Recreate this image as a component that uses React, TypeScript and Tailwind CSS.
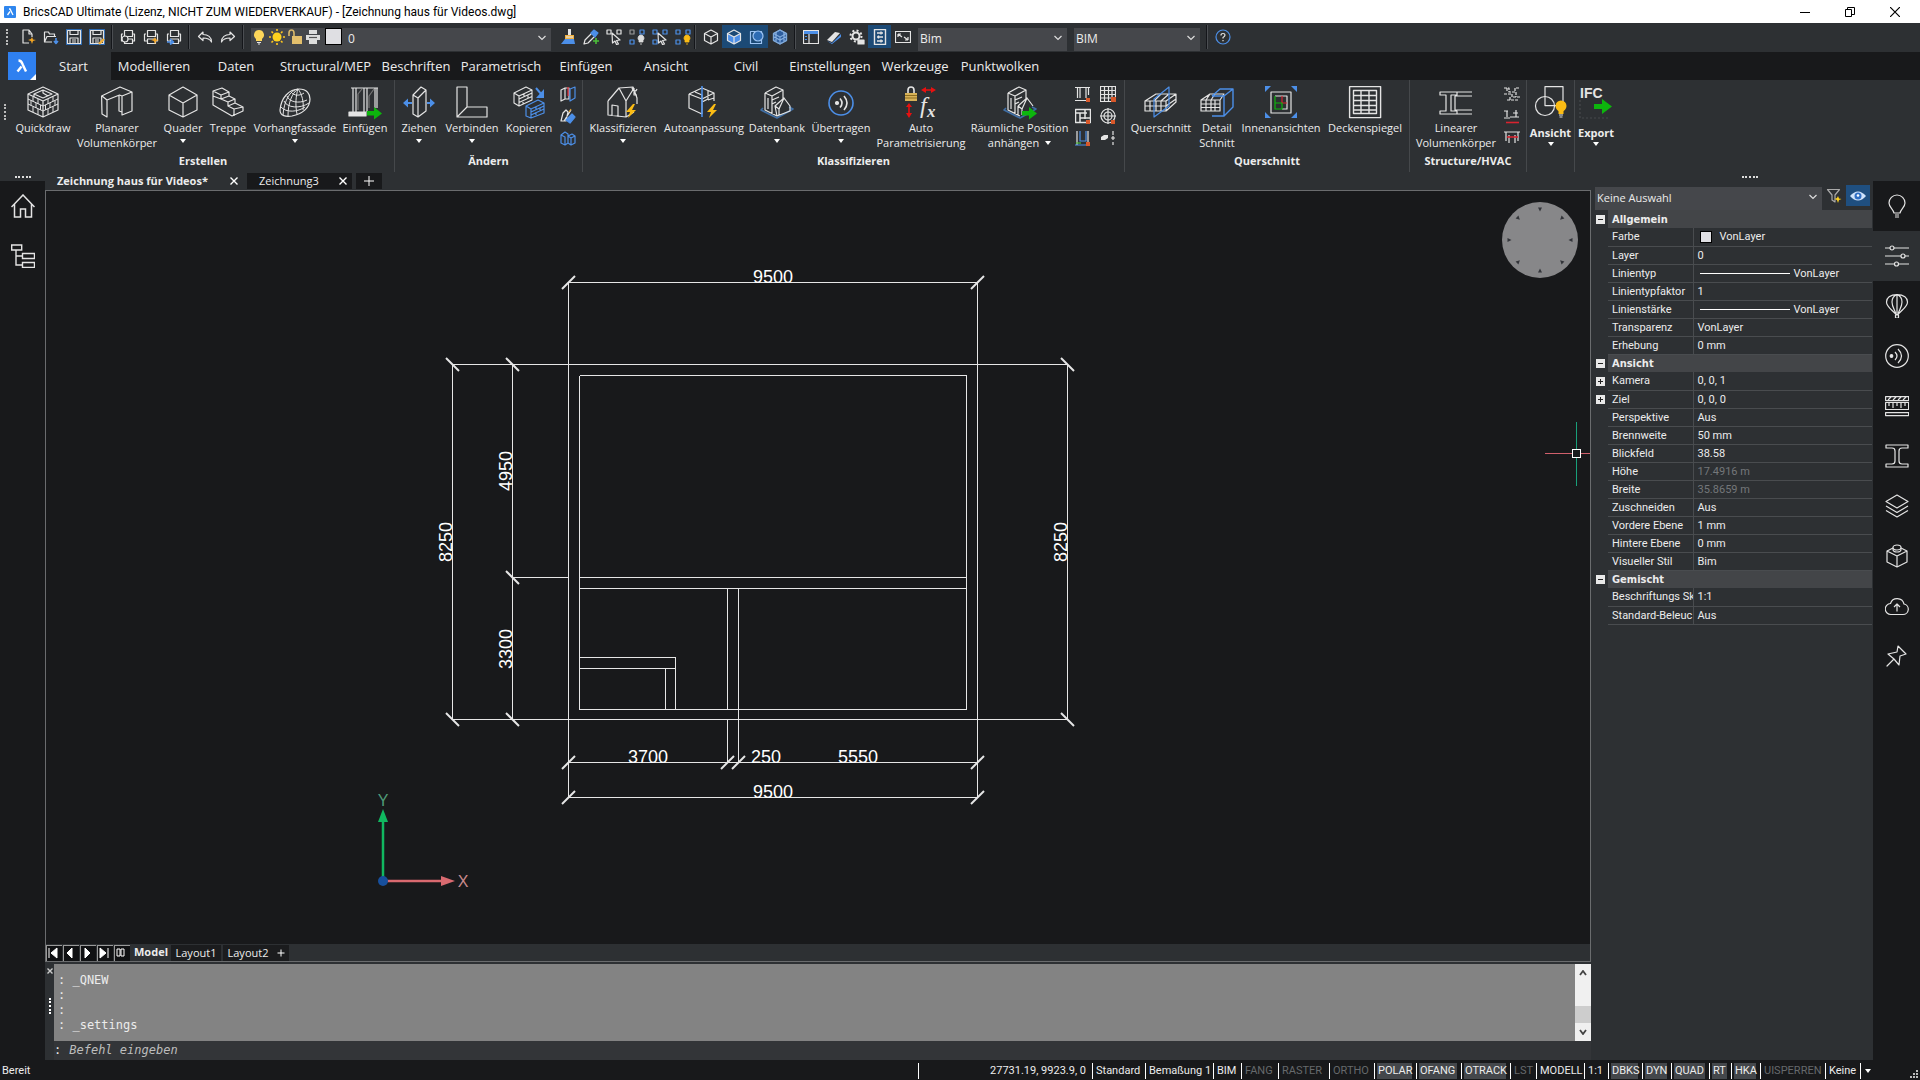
import { useState } from "react";
import type { ReactNode } from "react";

const W = "#e4e4e4";
const B = "#4c8fe8";
const Y = "#fbbc14";
const G = "#0db50d";
const R = "#d8232f";

function Big({ children }: { children: ReactNode }) {
  return (
    <svg viewBox="0 0 32 32" className="size-8 shrink-0 overflow-visible" fill="none" stroke={W} strokeWidth="1.2" strokeLinejoin="round">
      {children}
    </svg>
  );
}

function Small({ children }: { children: ReactNode }) {
  return (
    <svg viewBox="0 0 16 16" className="size-4 shrink-0" fill="none" stroke={W} strokeWidth="1.2" strokeLinejoin="round">
      {children}
    </svg>
  );
}

const bolt = <path d="M26 18l-7 8h4l-2 6 8-8h-4l3-6z" fill={Y} stroke="none" />;
const arrow = <path d="M18 25h7v-4l8 6.500-8 6v-4h-7z" fill={G} stroke="none" />;

const icons: Record<string, ReactNode> = {
  quickdraw: (
    <Big>
      <path d="M1 8L16 1l15 7v16l-15 7-15-7z M1 8l15 7 15-7 M16 15v16 M7 8l9-4 9 4-9 4z M7 8v3 M16 4v3l5 3" />
      <path d="M1 13l15 7 15-7 M1 18l15 7 15-7 M6 10.500v5 M11 13v5 M4 14.500v5 M9 17v5 M13.500 19v5 M6 20.500v5.500 M11 23v5.500 M26 10.500v5 M21 13v5 M28 14.500v5 M23 17v5 M18.500 19v5 M26 20.500v5.500 M21 23v5.500" strokeWidth="1" />
    </Big>
  ),
  planar: (
    <Big>
      <path d="M0.600 10L19 1l12 5v19l-10 4v-19l-2.500-1L6 14v17l-5-3z M1 10l5 4 M31 6l-10 4 M21 26l-3-1V9" />
    </Big>
  ),
  box: (
    <Big>
      <path d="M2 9L16 1l14 8v15l-14 7-14-7z M2 9l14 8 14-8 M16 17v14" />
    </Big>
  ),
  stairs: (
    <Big>
      <path d="M1 5l9-3 7 4v4l6 3v4l8 4v4l-11 5L1 19z M1 5l8 4v4l7 3v4l6 3v7 M9 9l8-3 M9 13l8-3 M16 16l7-3 M16 20l7-3 M22 23l9-2 M1 10l8 3" />
    </Big>
  ),
  dome: (
    <Big>
      <path d="M1 24C2 12 10 3 20 3c8 0 11 5 11 10 0 9-8 15-18 17-6 1-12 0-12-6z" />
      <path d="M8 10c2 6 12 8 20 4 M5 15c3 7 16 8 25 2 M2 21c5 6 17 5 24 0 M12 6c3 4 9 4 13 1 M19 3c-6 4-10 14-10 27 M19 3c-2 6-3 16-1 25 M19 3c4 5 6 13 5 21 M19 3c-8 1-14 12-15 26" strokeWidth="1" />
    </Big>
  ),
  window: (
    <Big>
      <path d="M2 2h27 M4 2v24 M7 2v24 M15 2v24 M18 2v24 M26 2v20 M28 2v20" />
      <path d="M9 24V8l4-5 M20 22V10l5-7" stroke="#777" />
      <path d="M0 26h17v4H0z" fill={W} />
      {arrow}
    </Big>
  ),
  pull: (
    <Big>
      <path d="M10 9l8-8 5 3v21l-8 6-5-3z M10 9l5 3 8-8 M15 12v19" />
      <path d="M9 17H2 M24 17h6" stroke={B} strokeWidth="2" />
      <path d="M5 12.500L0 17l5 4.500z M27 12.500l5 4.500-5 4.500z" fill={B} stroke="none" />
    </Big>
  ),
  connect: (
    <Big>
      <path d="M1 1h10v20h20v10H1z M1 31l10-10" />
    </Big>
  ),
  copy: (
    <Big>
      <path d="M1 7l12-6 6 3v10L6 20l-5-3z M1 7l5 3 13-6 M6 10v10 M6 13l13-6 M6 16.500l13-6 M11 8v3 M15 9.500v3 M10 14.500v3" strokeWidth="1.100" />
      <path d="M13 20l12-6 6 3v10L18 32l-5-2z M13 20l5 3 13-6 M18 23v9 M18 26l13-6 M18 29l13-6 M23 21v3 M27 22v3 M23 26v3" stroke={B} />
      <path d="M23 2l6 7" stroke={B} strokeWidth="2" />
      <path d="M31 3v9h-8z" fill={B} stroke="none" />
    </Big>
  ),
  house: (
    <Big>
      <path d="M1 15L12 2l14-1 4 11v6 M12 2l7 13v16l8-5 M1 15v14l18 2 M5 30V19l6 1v11 M19 15L27 2 M27 2v7h3 M25 2c1 4 4 4 5 1" />
      {bolt}
    </Big>
  ),
  autofit: (
    <Big>
      <path d="M1 8L14 2l12 5v8 M1 8v14l13 6 M1 8l13 5v15 M14 13l12-6 M7 6l7 3v4 M20 5v8l-6 3 M26 12l-6 2" />
      <path d="M14 0v31" stroke={B} strokeWidth="1.600" />
      {bolt}
    </Big>
  ),
  database: (
    <Big>
      <path d="M2 22l-2 2 16 8 16-9-4-2" stroke="#3f6ea5" strokeWidth="1.600" />
      <path d="M4 7L15 1l7 3v9 M4 7l7 3v18 M4 7v17l12 6 M11 10l11-6 M7 12v11 M11 14l7-3 M11 18l4-2 M14 20l9-8 6 8v5l-13 5z M14 20l4 3 5-11 M18 23v6" />
    </Big>
  ),
  transmit: (
    <Big>
      <circle cx="16" cy="17" r="12" stroke={B} strokeWidth="1.600" />
      <circle cx="12" cy="17" r="1.500" fill={W} />
      <path d="M15 12.500q4 4.500 0 9 M19 10q6 7 0 14" strokeWidth="1.600" />
    </Big>
  ),
  autoparam: (
    <Big>
      <path d="M3 7V4q0-3 3-3t3 3v3" strokeWidth="1.600" />
      <path d="M0 7h12v8H0z" fill="#d7b258" stroke="none" />
      <path d="M0 9.500h12 M0 12h12" stroke="#8d6d20" />
      <path d="M18 4h11 M4 20v9" stroke="#e81010" strokeWidth="1.600" />
      <path d="M16 4l5-3v6z M31 4l-5-3v6z M4 17l-3 4h6z M4 32l-3-5h6z" fill="#e81010" stroke="none" />
      <text x="15" y="27" fill={W} stroke="none" className="font-['Liberation_Serif'] text-[24px] italic">f</text>
      <text x="22" y="31" fill={W} stroke="none" className="font-['Liberation_Serif'] text-[17px] font-bold italic">x</text>
    </Big>
  ),
  spatial: (
    <Big>
      <path d="M2 22l-2 2 16 8 16-9-4-2" stroke="#3f6ea5" strokeWidth="1.600" />
      <path d="M4 7L15 1l7 3v9 M4 7l7 3v18 M4 7v17l12 6 M11 10l11-6 M7 12v11 M11 14l7-3 M11 18l4-2 M14 20l9-8 6 8 M14 20v9 M14 20l4 3 5-11 M18 23v6" />
      {arrow}
    </Big>
  ),
  section: (
    <Big>
      <path d="M0 15l11-7h20v8l-10 9H0z M0 15h21v10 M21 15l10-7 M0 20h21l10-7 M5 15v10 M11 15v10 M16 8l-7 7 M24 8l-8 7v10" />
      <path d="M9 13L24 1v19L9 31z" stroke={B} />
    </Big>
  ),
  detail: (
    <Big>
      <path d="M0 14l9-6h14l-4 6v11H0z M0 14h19 M0 18h19 M0 21.500h19 M5 14v11 M10 14v11 M14 14v11 M9 8l-4 6 M14 8l-4 6" />
      <path d="M11 10l8-7h13v18l-9 9H11 M32 3l-9 7v20 M11 10h12" stroke={B} strokeWidth="1.400" />
    </Big>
  ),
  interior: (
    <Big>
      <path d="M6 6h20v21H6z" />
      <path d="M10 10h12v13h-5" />
      <path d="M17 10v7h5" stroke={R} />
      <path d="M10 10v13h7v-6h-7" stroke={G} />
      <path d="M0 0h6L0 6z M32 0v6l-6-6z M0 32v-6l6 6z M32 32h-6l6-6z" fill={B} stroke="none" />
    </Big>
  ),
  ceiling: (
    <Big>
      <path d="M0.600 0.600h31v31h-31z M4.500 4.500h23v23h-23z M12 4.500v23 M20 4.500v23 M4.500 9.500h23 M4.500 14.500h23 M4.500 19.500h23 M4.500 24h23" strokeWidth="1.400" />
    </Big>
  ),
  beam: (
    <Big>
      <path d="M32 6H0v3h6v16H0v3h32 M32 10H15v14h17 M17 6v3h-6v16h6v3" />
    </Big>
  ),
  view: (
    <Big>
      <path d="M10 0.600h18v19H10z" />
      <circle cx="10" cy="20" r="9.500" />
      <circle cx="26" cy="20" r="5.500" fill={Y} stroke="none" />
      <path d="M23.500 24h5v4h-5z" fill={Y} stroke="none" />
      <path d="M24 29h4 M24.500 31h3" stroke="#ddd" />
    </Big>
  ),
  export: (
    <Big>
      <text x="0" y="12" fill={W} stroke="none" className="font-['Liberation_Sans'] text-[14px]">IFC</text>
      <path d="M0 14v18h30" stroke="#46494c" strokeDasharray="2 2" />
      <path d="M14 18h8v-5l10 7.500-10 7.500v-5h-8z" fill={G} stroke="none" />
    </Big>
  ),
};

interface Tool {
  icon: string;
  label: string[];
  width: string;
  menu?: boolean;
}

function ToolButton({ icon, label, width, menu }: Tool) {
  return (
    <button className={`flex shrink-0 flex-col items-center pt-1.5 text-center text-[11px] leading-[15px] whitespace-nowrap hover:bg-[#3d4145] ${width}`}>
      {icons[icon]}
      <span className="mt-0.5 flex flex-col items-center">
        {label.map((line, i) => (
          <span key={line} className="flex items-center gap-1.5">
            {line}
            {menu && i === 1 && <Caret />}
          </span>
        ))}
      </span>
      {menu && label.length === 1 && <span className="mt-1"><Caret /></span>}
    </button>
  );
}

function Caret() {
  return <span className="block border-x-[3px] border-t-4 border-x-transparent border-t-white" />;
}

function Group({ title, tools, children }: { title: string; tools: Tool[]; children?: ReactNode }) {
  return (
    <section className="flex shrink-0 flex-col border-r border-[#45484b]">
      <div className="flex h-[73px] pr-1">
        {tools.map((t) => <ToolButton key={t.label[0]} {...t} />)}
        {children}
      </div>
      <h2 className="text-center text-[11px] leading-[15px] font-bold">{title}</h2>
    </section>
  );
}

const createTools: Tool[] = [
  { icon: "quickdraw", label: ["Quickdraw"], width: "w-[62px]" },
  { icon: "planar", label: ["Planarer", "Volumenkörper"], width: "w-[86px]" },
  { icon: "box", label: ["Quader"], width: "w-[46px]", menu: true },
  { icon: "stairs", label: ["Treppe"], width: "w-11" },
  { icon: "dome", label: ["Vorhangfassade"], width: "w-[90px]", menu: true },
  { icon: "window", label: ["Einfügen"], width: "w-[50px]" },
];

const editTools: Tool[] = [
  { icon: "pull", label: ["Ziehen"], width: "w-12", menu: true },
  { icon: "connect", label: ["Verbinden"], width: "w-[58px]", menu: true },
  { icon: "copy", label: ["Kopieren"], width: "w-14" },
];

const classifyTools: Tool[] = [
  { icon: "house", label: ["Klassifizieren"], width: "w-20", menu: true },
  { icon: "autofit", label: ["Autoanpassung"], width: "w-[82px]" },
  { icon: "database", label: ["Datenbank"], width: "w-16", menu: true },
  { icon: "transmit", label: ["Übertragen"], width: "w-16", menu: true },
  { icon: "autoparam", label: ["Auto", "Parametrisierung"], width: "w-24" },
  { icon: "spatial", label: ["Räumliche Position", "anhängen"], width: "w-[101px]", menu: true },
];

const sectionTools: Tool[] = [
  { icon: "section", label: ["Querschnitt"], width: "w-[72px]" },
  { icon: "detail", label: ["Detail", "Schnitt"], width: "w-10" },
  { icon: "interior", label: ["Innenansichten"], width: "w-[88px]" },
  { icon: "ceiling", label: ["Deckenspiegel"], width: "w-20" },
];

const tabs: [string, string][] = [
  ["Start", "w-[75px]"],
  ["Modellieren", "w-[86px]"],
  ["Daten", "w-[78px]"],
  ["Structural/MEP", "w-[101px]"],
  ["Beschriften", "w-[80px]"],
  ["Parametrisch", "w-[90px]"],
  ["Einfügen", "w-[80px]"],
  ["Ansicht", "w-[80px]"],
  ["Civil", "w-[80px]"],
  ["Einstellungen", "w-[88px]"],
  ["Werkzeuge", "w-[82px]"],
  ["Punktwolken", "w-[88px]"],
];

function TitleBar() {
  return (
    <header className="flex h-[23px] shrink-0 items-center bg-white text-black">
      <svg viewBox="0 0 12 12" className="ml-1 size-3">
        <rect width="12" height="12" rx="1" fill="#2f86ee" />
        <path d="M5 3l1 0 3 6M6 5.500L3.500 9" stroke="#fff" strokeWidth="1.300" fill="none" />
      </svg>
      <h1 className="ml-[7px] font-[Roboto] text-xs">BricsCAD Ultimate (Lizenz, NICHT ZUM WIEDERVERKAUF) - [Zeichnung haus für Videos.dwg]</h1>
      <div className="ml-auto flex">
        <button aria-label="Minimieren" className="flex w-[45px] justify-center">
          <svg viewBox="0 0 10 10" className="size-2.5" stroke="#000"><path d="M0 5.500h10" /></svg>
        </button>
        <button aria-label="Verkleinern" className="flex w-[45px] justify-center">
          <svg viewBox="0 0 10 10" className="size-2.5" fill="none" stroke="#000"><path d="M0.500 2.500h6v7h-6z M2.500 2.500v-2h7v7h-3" /></svg>
        </button>
        <button aria-label="Schließen" className="mr-[3px] flex w-[45px] justify-center">
          <svg viewBox="0 0 10 10" className="size-2.5" stroke="#000" strokeWidth="1.200"><path d="M0 0l10 10M10 0L0 10" /></svg>
        </button>
      </div>
    </header>
  );
}

const floppy = <path d="M1.500 1.500h13v13h-13z M4 1.500v4h8v-4 M4 14.500V9h8v5.500 M6 11h4 M6 13h4" />;
const printer = <path d="M4.500 1.500h8v6h-8z M3 5H1.500v7H4 M13 5h1.500v7h-2 M4.500 10h8v4.500h-8z" />;
const cursor = <path d="M6 4l8 7-3.500 0.500 2 3.500-2 0.500-1.500-3.500L6.500 14z" fill="#2d3033" />;
const cube = <path d="M8 1l6.500 3.500v7L8 15l-6.500-3.500v-7z M1.500 4.500L8 8l6.500-3.500 M8 8v7" />;

function squares(first: string) {
  return (
    <>
      <path d="M1 1h4v4H1z" stroke={first} />
      <path d="M11 1h4v4h-4z M1 11h4v4H1z" stroke={B} />
    </>
  );
}

function bulb(color: string) {
  return <path d="M12 6a3.200 3.200 0 0 0-2 5.500V13h4v-1.500A3.200 3.200 0 0 0 12 6z M11 15h2" fill={color} stroke={color} strokeWidth="0.800" />;
}

function Bar({ name, children, active }: { name: string; children: ReactNode; active?: boolean }) {
  return (
    <button aria-label={name} className={`flex h-[23px] w-[23px] shrink-0 items-center justify-center ${active ? "bg-[#1c4a76]" : "hover:bg-[#3d4145]"}`}>
      <Small>{children}</Small>
    </button>
  );
}

function Sep() {
  return <span className="mx-[3px] h-6 w-0.5 shrink-0 border-l border-[#14161a] bg-[#4b4e52]" />;
}

function Chevron({ className }: { className: string }) {
  return (
    <svg viewBox="0 0 8 6" className={`pointer-events-none absolute h-1.5 w-2 ${className}`} fill="none" stroke="#ddd" strokeWidth="1.200">
      <path d="M0.500 1L4 4.500 7.500 1" />
    </svg>
  );
}

function Combo({ label, value, className, size = "text-xs" }: { label: string; value: string; className: string; size?: string }) {
  return (
    <div className={`relative h-[23px] shrink-0 ${className}`}>
      <select aria-label={label} className={`h-full w-full appearance-none bg-[#45474b] pl-0.5 ${size}`}>
        <option>{value}</option>
      </select>
      <Chevron className="top-[10px] right-[5px]" />
    </div>
  );
}

function Toolbar() {
  return (
    <div className="flex h-[29px] shrink-0 items-center pb-0.5">
      <span className="ml-1.5 h-4 w-2.5 shrink-0"><span className="block h-full w-0 border-l-2 border-dotted border-[#bbb]" /></span>
      <Bar name="Neu"><path d="M12 8V5L9 1H3v13h6 M9 1v4h3" /><path d="M12 8l1 2.500 3 0.500-3 1-1 3-1-3-3-1 3-1z" fill="#f5a623" stroke="none" /></Bar>
      <Bar name="Öffnen"><path d="M9 13H1.500V3h4l1 2h5v2.500 M1.500 13L4 7.500h9" /><path d="M13 9v5 M11 12l2 2.500 2-2.500" stroke={B} strokeWidth="1.600" /></Bar>
      <Bar name="Speichern"><path d="M0.500 0.500h15v15h-15z" stroke="#2b68b0" />{floppy}</Bar>
      <Bar name="Speichern unter"><path d="M0.500 0.500h15v15h-15z" stroke="#2b68b0" />{floppy}<path d="M10 15l5-5" stroke="#f0b040" strokeWidth="2.400" /></Bar>
      <Sep />
      <Bar name="Druckvorschau">{printer}<circle cx="5" cy="10" r="3" fill="#2d3033" /></Bar>
      <Bar name="Drucken">{printer}<path d="M12 8l1 2.500 3 0.500-3 1-1 3.500-1-3.500-3-1 3-1z" fill="#f5a623" stroke="none" /></Bar>
      <Bar name="Publizieren">{printer}<path d="M1 13h6 M4 10l3.500 3L4 15.500" stroke={B} strokeWidth="1.600" /></Bar>
      <Sep />
      <Bar name="Rückgängig"><path d="M6 3L1.500 7.500 6 11.500V9c4 0 7 1 8.500 4C14.500 8 11 5.500 6 5.500z" /></Bar>
      <Bar name="Wiederherstellen"><path d="M10 3l4.500 4.500L10 11.500V9c-4 0-7 1-8.500 4C1.500 8 5 5.500 10 5.500z" /></Bar>
      <Sep />
      <div className="relative ml-1 h-[23px] w-[300px] shrink-0">
        <select aria-label="Layer" className="h-full w-full appearance-none bg-[#45474b] pl-[97px] text-xs">
          <option>0</option>
        </select>
        <div className="pointer-events-none absolute inset-y-0 left-0 flex items-center gap-0.5">
          <Small><path d="M8 1a5 5 0 0 0-3 9v2h6v-2a5 5 0 0 0-3-9z" fill="#fdd65a" stroke="none" /><path d="M6 13.500h4 M7 15h2" /></Small>
          <Small><circle cx="8" cy="8" r="4.500" fill="#ffd21f" stroke="none" /><path d="M8 0v2 M8 14v2 M0 8h2 M14 8h2 M2.500 2.500l1.500 1.500 M12 12l1.500 1.500 M13.500 2.500L12 4 M4 12l-1.500 1.500" stroke="#ffc81f" strokeWidth="1.600" /></Small>
          <Small><path d="M2 7V4q0-3 2.500-3T7 4v3" stroke="#d9b86a" strokeWidth="1.600" /><path d="M5 7h10v8H5z" fill="#e3bf6c" stroke="none" /></Small>
          <Small><path d="M4 1h8v4H4z M1 6h14v5H1z M4 10h8v5H4z" fill="#ddd" stroke="none" /><path d="M4 8.500h8" stroke="#555" /></Small>
          <span className="ml-0.5 size-[17px] border border-black bg-[#dfdfe3]" />
        </div>
        <Chevron className="top-[10px] right-[5px]" />
      </div>
      <span className="w-[5px] shrink-0" />
      <Bar name="Eigenschaften übertragen"><path d="M8 0h3v6H8z" fill={W} stroke="none" /><path d="M5 6h9v4H5z" fill="#f0b040" stroke="none" /><path d="M6 8h7" stroke={W} /><path d="M1 15l4-5h9l1 5z" fill={B} stroke="none" /></Bar>
      <Bar name="Pipette"><path d="M1 15l1-4 7-7 3 3-7 7z" /><path d="M8 4l3-3 4 3-3 4z" fill={B} stroke={B} /><path d="M13 9v6 M10 12h6" stroke="#4bbf3a" strokeWidth="1.600" /></Bar>
      <Bar name="Layer wählen"><path d="M1 1h4v4H1z M11 1h4v4h-4z" />{cursor}</Bar>
      <Bar name="Layer aus">{squares("#999")}{bulb("#ddd")}</Bar>
      <Bar name="Layer isolieren">{squares(B)}{cursor}</Bar>
      <Bar name="Layer ein">{squares(B)}{bulb(Y)}</Bar>
      <span className="mr-[3px] h-6 w-0.5 shrink-0 border-l border-[#14161a] bg-[#4b4e52]" />
      <Bar name="Drahtmodell">{cube}</Bar>
      <Bar name="Schattiert" active><path d="M8 8l6.500-3.500v7L8 15z M1.500 4.500v7L8 15V8z" fill={B} stroke="none" />{cube}</Bar>
      <Bar name="Auswahl" active><path d="M1.500 2.500h11v12h-11z" stroke="#9cc3f2" /><circle cx="9" cy="7" r="5" fill="#2e6cb4" stroke="#9cc3f2" /></Bar>
      <Bar name="Flächen"><g stroke="#7fa8d8"><path d="M8 1l6.500 3.500v7L8 15l-6.500-3.500v-7z" fill="#2e5e9e" />{cube}</g><path d="M4 3v9 M12 3v9 M2 8l6 3 6-3" stroke="#8db4e2" /></Bar>
      <Sep />
      <Bar name="Panels"><path d="M0.500 1.500h15v13h-15z M6 5v10" /><path d="M1 2h14v3H1z" fill={B} stroke="none" /><path d="M3 7v1 M3 10v1" stroke={B} strokeWidth="2" /></Bar>
      <Bar name="Radieren"><path d="M1 11l8-8 5 1-8 9z" fill={W} stroke="none" /><path d="M1 12l5 2 9-9v3l-9 7z" fill={B} stroke="none" /></Bar>
      <Bar name="Einstellungen"><circle cx="7" cy="7" r="3.500" strokeWidth="2" /><circle cx="7" cy="7" r="5.500" strokeWidth="2" strokeDasharray="2 2.300" /><path d="M9 11h6v4H9z" fill={W} /></Bar>
      <Bar name="Eigenschaften" active><path d="M2.500 0.500h11v15h-11z M5 4h6 M5 8h6 M5 12h6 M9 2.500v3 M6.500 6.500v3 M9 10.500v3" strokeWidth="1.400" /></Bar>
      <Bar name="Vollbild"><path d="M0.500 2.500h15v11h-15z M3 5l4 3 M3 5h3 M3 5v3 M13 11L9 8 M13 11h-3 M13 11V8" /></Bar>
      <Combo label="Visueller Stil" value="Bim" className="ml-1 w-[149px]" />
      <Combo label="Arbeitsbereich" value="BIM" className="mr-[3px] ml-[7px] w-[126px]" />
      <Sep />
      <Bar name="Hilfe"><circle cx="8" cy="8" r="7" stroke={B} /><path d="M6 6.500q0-2 2-2t2 1.500q0 1.200-2 2.500v1 M8 11v1.200" /></Bar>
    </div>
  );
}

function RibbonTabs() {
  const [tab, setTab] = useState("Start");
  return (
    <nav className="flex h-7 shrink-0 bg-[#18191b] text-[13px]">
      <div className="bg-[#2d3033] pl-2">
        <button aria-label="BricsCAD" className="block size-7 bg-[#2f80f0]">
          <svg viewBox="0 0 28 28" className="size-7" fill="none">
            <path d="M10.500 8.500c3 0 3.500 2 4.200 4l3.300 7 M13.500 14.500L9.500 19.500" stroke="#fff" strokeWidth="2.400" />
            <path d="M28 22v6h-6z" fill="#fff" />
          </svg>
        </button>
      </div>
      {tabs.map(([name, width]) => (
        <button key={name} onClick={() => setTab(name)} className={`${width} shrink-0 pt-0.5 ${name === tab ? "bg-[#2d3033]" : ""}`}>
          {name}
        </button>
      ))}
    </nav>
  );
}

function Ribbon() {
  return (
    <div className="flex h-[92px] shrink-0">
      <span className="mt-6 ml-1 h-4 w-2 shrink-0 border-l-2 border-dotted border-[#bbb]" />
      <Group title="Erstellen" tools={createTools} />
      <Group title="Ändern" tools={editTools}>
        <div className="flex w-[21px] flex-col items-center gap-1.5 pt-1.5">
          <Small><path d="M1 4l4-2v11l-4 2z M5 2h4v11H5" /><path d="M10 3l5-2v11l-5 3z" stroke={B} /><path d="M8 1v9" stroke={R} /></Small>
          <Small><path d="M1 13l2-8 3-3 2 2-2 9z M4 13l7-11" /><path d="M6 12l6-6 3 3-5 6z" fill={B} stroke={B} /><path d="M9 4l2-3" stroke="#e0a030" /></Small>
          <Small><path d="M1 5l4-3 3 2v9l-3 2-4-2z M8 6l4-2 3 2v7l-4 2-3-2 M1 5l4 2v8 M11 8v7 M8 6l3 2 4-2" stroke={B} /></Small>
        </div>
      </Group>
      <Group title="Klassifizieren" tools={classifyTools}>
        <div className="grid w-[50px] grid-cols-2 justify-items-center gap-y-1.5 self-start pt-1.5">
          <Small><path d="M0 1.500h15 M2.500 1v11 M5 1v11 M11 1v11 M13.500 1v8 M0 14.500h12" /><path d="M11 12h4v4h-4z" fill="#d8582a" stroke="none" /></Small>
          <Small><path d="M0.500 0.500h15v15h-15z M4.500 0v16 M8.500 0v16 M12 0v16 M0 4.500h16 M0 8.500h16 M0 12h16" /><path d="M11 11h5v5h-5z" fill="#d8582a" stroke="none" /></Small>
          <Small><path d="M0.500 1.500h15v13h-15z M0 5h12 M5 5v10 M10 1v10 M5 10h10" strokeWidth="1.500" /><path d="M11 12h4v4h-4z" fill="#d8582a" stroke="none" /></Small>
          <Small><circle cx="8" cy="8" r="7" /><circle cx="8" cy="8" r="4" /><path d="M8 0v16 M0 8h16" /><path d="M11 12h4v4h-4z" fill="#d8582a" stroke="none" /></Small>
          <Small><path d="M2 1v14 M13 1v14" /><path d="M5 1v10h6V1 M0 15h12" stroke={B} /><path d="M1 13h5" stroke="#4bbf3a" /><path d="M11 12h4v4h-4z" fill="#d8582a" stroke="none" /></Small>
          <Small><path d="M1 7l3-2h4v3L5 10H1z" fill={W} stroke="none" /><path d="M13 1v4 M11 8h4 M13 6v4 M13 12v3" /></Small>
        </div>
      </Group>
      <Group title="Querschnitt" tools={sectionTools} />
      <Group title="Structure/HVAC" tools={[{ icon: "beam", label: ["Linearer", "Volumenkörper"], width: "w-[92px]" }]}>
        <div className="flex w-5 flex-col items-center gap-1.5 pt-1.5">
          <Small><path d="M0 2h5v4h6V2h5 M0 8h8v3h8 M3 14h12 M3 2v4 M12 6v5 M6 11v4" strokeDasharray="3 1" /></Small>
          <Small><path d="M0 3h4 M3 3v6 M6 9h9 M12 2v7 M0 10h6 M9 5h5" /><path d="M2 14.500h13" stroke={R} strokeWidth="1.600" /></Small>
          <Small><path d="M0 2h16 M2 2v9 M5 5v8 M11 5v8 M14 2v9" /><path d="M3 7h11" stroke={R} strokeWidth="1.600" /></Small>
        </div>
      </Group>
      <RibbonPanel icon="view" label="Ansicht" className="w-12 border-r border-[#45484b]" />
      <RibbonPanel icon="export" label="Export" className="w-[42px]" />
    </div>
  );
}

function RibbonPanel({ icon, label, className }: { icon: string; label: string; className: string }) {
  return (
    <button className={`flex shrink-0 flex-col items-center pt-1.5 text-[11px] leading-[15px] font-bold ${className}`}>
      {icons[icon]}
      <span className="mt-[7px]">{label}</span>
      <span className="mt-0.5"><Caret /></span>
    </button>
  );
}

// [x1, y1, x2, y2] in canvas pixels
const planLines = [
  // extension lines
  [522, 91, 522, 606], [931, 91, 931, 606],
  [406, 173, 1021, 173], [406, 528, 1021, 528],
  [466, 386, 522, 386],
  // inner walls
  [533, 184, 920, 184], [533, 518, 920, 518], [533, 184, 533, 518], [920, 184, 920, 518],
  [533, 386, 920, 386], [533, 397, 920, 397],
  [681, 397, 681, 518], [681, 528, 681, 571], [692, 397, 692, 571],
  [533, 466, 629, 466], [533, 477, 629, 477], [629, 466, 629, 518], [619, 477, 619, 518],
  // dimension lines
  [522, 91, 931, 91], [522, 571, 931, 571], [522, 606, 931, 606],
  [406, 173, 406, 528], [466, 173, 466, 528], [1021, 173, 1021, 528],
];

const ticks = [[522, 91], [931, 91], [522, 571], [681, 571], [692, 571], [931, 571], [522, 606], [931, 606]];
const sideTicks = [[406, 173], [466, 173], [1021, 173], [466, 386], [406, 528], [466, 528], [1021, 528]];

const dims: [string, number, number][] = [
  ["9500", 727, 92], ["3700", 602, 572], ["250", 720, 572], ["5550", 812, 572], ["9500", 727, 607],
];
const sideDims: [string, number, number][] = [
  ["8250", 406, 351], ["4950", 466, 280], ["3300", 466, 458], ["8250", 1021, 351],
];

function Drawing() {
  return (
    <svg width="1100" height="752" viewBox="0 0 1100 752" className="block font-['Liberation_Sans'] text-lg leading-none">
      <g stroke="#e6e6e6" shapeRendering="crispEdges">
        {planLines.map(([x1, y1, x2, y2], i) => (
          <line key={i} x1={x1 + 0.5} y1={y1 + 0.5} x2={x2 + 0.5} y2={y2 + 0.5} />
        ))}
      </g>
      <g stroke="#e6e6e6" strokeWidth="2">
        {ticks.map(([x, y], i) => <line key={i} x1={x - 6} y1={y + 7} x2={x + 7} y2={y - 6} />)}
        {sideTicks.map(([x, y], i) => <line key={i} x1={x - 6} y1={y - 6} x2={x + 7} y2={y + 7} />)}
      </g>
      <g fill="#fff" textAnchor="middle">
        {dims.map(([t, x, y]) => <text key={t + y} x={x} y={y}>{t}</text>)}
        {sideDims.map(([t, x, y]) => <text key={t + x} transform={`translate(${x} ${y}) rotate(-90)`}>{t}</text>)}
      </g>
      {/* UCS icon */}
      <path d="M337 690V625" stroke="#10b860" strokeWidth="2.500" />
      <path d="M337 618l-5 13h10z" fill="#10b860" />
      <path d="M337 690h62" stroke="#d96a70" strokeWidth="2.500" />
      <path d="M409 690l-14-5v10z" fill="#d96a70" />
      <circle cx="337" cy="690" r="5" fill="#174f9c" />
      <text x="337" y="615" textAnchor="middle" fill="#4f9c78" className="text-base">Y</text>
      <text x="417" y="696" textAnchor="middle" fill="#c98a8c" className="text-base">X</text>
    </svg>
  );
}

function Canvas() {
  return (
    <div className="relative min-h-0 flex-1 overflow-hidden bg-[#18191b]">
      <div className="absolute inset-0"><Drawing /></div>
      <svg viewBox="0 0 76 76" className="absolute top-[11px] right-3 size-[76px]">
        <circle cx="38" cy="38" r="38" fill="#878789" />
        {[0, 45, 90, 135, 180, 225, 270, 315].map((a) => (
          <path key={a} d="M36 5.500h4l-2 4z" fill="#33353a" transform={`rotate(${a} 38 38)`} />
        ))}
      </svg>
      <svg viewBox="0 0 45 64" className="absolute top-[231px] right-0 h-16 w-[45px]" fill="none" shapeRendering="crispEdges">
        <path d="M31.500 0v64" stroke="#18a07a" />
        <path d="M0 31.500h45" stroke="#d0606c" />
        <path d="M27.500 27.500h8v8h-8z" stroke="#fff" fill="#18191b" />
      </svg>
    </div>
  );
}

function DocTabs() {
  return (
    <div className="flex h-[18px] shrink-0 items-center text-[11px]">
      <div className="flex h-4 w-[202px] items-center pl-3 font-bold">
        <button className="whitespace-nowrap">Zeichnung haus für Videos*</button>
        <button aria-label="Tab schließen" className="mr-[9px] ml-auto"><Cross /></button>
      </div>
      <div className="flex h-4 w-[105px] items-center bg-[#18191b] pl-3">
        <button>Zeichnung3</button>
        <button aria-label="Tab schließen" className="mr-[5px] ml-auto"><Cross /></button>
      </div>
      <button className="ml-1 flex h-4 w-[26px] items-center justify-center bg-[#18191b]" aria-label="Neue Zeichnung">
        <svg viewBox="0 0 10 10" className="size-2.5" stroke="#fff"><path d="M5 0v10M0 5h10" /></svg>
      </button>
    </div>
  );
}

function Cross() {
  return <svg viewBox="0 0 8 8" className="size-2" stroke="#fff" strokeWidth="1.400"><path d="M0.500 0.500l7 7M7.500 0.500l-7 7" /></svg>;
}

const navIcons = ["M2 1v10 M10 1L4 6l6 5z", "M8 1L3 6l5 5z", "M4 1l5 5-5 5z", "M10 1v10 M2 1l6 5-6 5z", "M2 2h3v7H2z M6 2h3v7H6z"];

function LayoutTabs() {
  return (
    <div className="flex h-[18px] shrink-0 items-center border-b border-[#6a6c6e] text-[11px] whitespace-nowrap">
      {navIcons.map((d, i) => (
        <button key={d} aria-label={`Layout ${i}`} className="mr-px flex size-4 items-center border-t border-l border-[#999] bg-[#101113]">
          <svg viewBox="0 0 12 12" className="size-3" fill={i === 4 ? "none" : "#fff"} stroke="#fff"><path d={d} /></svg>
        </button>
      ))}
      <button className="w-10 font-bold">Model</button>
      <button className="h-4 w-[50px] bg-[#1b1c1e]">Layout1</button>
      <button className="ml-0.5 h-4 w-[50px] bg-[#1b1c1e]">Layout2</button>
      <button className="flex size-4 items-center justify-center bg-[#1b1c1e]" aria-label="Neues Layout">
        <svg viewBox="0 0 8 8" className="size-2" stroke="#fff"><path d="M4 0.500v7M0.500 4h7" /></svg>
      </button>
    </div>
  );
}

function CommandLine() {
  return (
    <div className="flex h-[98px] shrink-0 pt-0.5 font-['DejaVu_Sans_Mono']">
      <div className="flex w-[9px] shrink-0 flex-col items-center">
        <button aria-label="Schließen" className="mt-1 block">
          <svg viewBox="0 0 6 6" className="size-1.5" stroke="#ccc" strokeWidth="1.400"><path d="M0.500 0.500l5 5M5.500 0.500l-5 5" /></svg>
        </button>
        <span className="mt-6 h-4 border-l-2 border-dotted border-white" />
      </div>
      <div className="flex min-w-0 flex-1 flex-col">
        <div className="flex h-[77px] shrink-0">
          <pre className="flex-1 bg-[#838383] pt-[9px] pl-1 font-['DejaVu_Sans_Mono'] text-xs leading-[15px]">{": _QNEW\n:\n:\n: _settings"}</pre>
          <div className="flex w-4 flex-col items-center bg-[#f0f0f0]">
            <svg viewBox="0 0 8 6" className="mt-1.5 h-1.5 w-2" fill="none" stroke="#444" strokeWidth="1.800"><path d="M1 5l3-4 3 4" /></svg>
            <span className="mt-auto h-[17px] w-full bg-[#cdcdcd]" />
            <svg viewBox="0 0 8 6" className="my-1.5 h-1.5 w-2" fill="none" stroke="#444" strokeWidth="1.800"><path d="M1 1l3 4 3-4" /></svg>
          </div>
        </div>
        <label className="flex flex-1 items-center bg-[#333538] pb-0.5 text-xs">
          <span>:</span>
          <input placeholder="Befehl eingeben" aria-label="Befehl" className="ml-2 flex-1 bg-transparent italic outline-none placeholder:text-[#bdbdbd]" />
        </label>
      </div>
    </div>
  );
}

type Row = { name: string; value: string; kind?: "swatch" | "line"; dim?: boolean; expand?: boolean };

const sections: { title: string; rows: Row[] }[] = [
  {
    title: "Allgemein",
    rows: [
      { name: "Farbe", value: "VonLayer", kind: "swatch" },
      { name: "Layer", value: "0" },
      { name: "Linientyp", value: "VonLayer", kind: "line" },
      { name: "Linientypfaktor", value: "1" },
      { name: "Linienstärke", value: "VonLayer", kind: "line" },
      { name: "Transparenz", value: "VonLayer" },
      { name: "Erhebung", value: "0 mm" },
    ],
  },
  {
    title: "Ansicht",
    rows: [
      { name: "Kamera", value: "0, 0, 1", expand: true },
      { name: "Ziel", value: "0, 0, 0", expand: true },
      { name: "Perspektive", value: "Aus" },
      { name: "Brennweite", value: "50 mm" },
      { name: "Blickfeld", value: "38.58" },
      { name: "Höhe", value: "17.4916 m", dim: true },
      { name: "Breite", value: "35.8659 m", dim: true },
      { name: "Zuschneiden", value: "Aus" },
      { name: "Vordere Ebene", value: "1 mm" },
      { name: "Hintere Ebene", value: "0 mm" },
      { name: "Visueller Stil", value: "Bim" },
    ],
  },
  {
    title: "Gemischt",
    rows: [
      { name: "Beschriftungs Sk", value: "1:1" },
      { name: "Standard-Beleuc", value: "Aus" },
    ],
  },
];

function Toggle({ plus }: { plus?: boolean }) {
  return (
    <button aria-label={plus ? "Aufklappen" : "Zuklappen"} className="block">
      <svg viewBox="0 0 9 9" className="size-[9px]" stroke="#222">
        <rect width="9" height="9" fill="#e8e8e8" stroke="none" />
        <path d={plus ? "M2 4.500h5 M4.500 2v5" : "M2 4.500h5"} />
      </svg>
    </button>
  );
}

function Properties() {
  return (
    <aside className="flex w-[282px] shrink-0 flex-col">
      <span className="mt-1 mr-[115px] mb-[6px] w-4 self-end border-t-2 border-dotted border-[#ddd]" />
      <div className="flex h-[23px] items-center pl-1">
        <Combo label="Auswahl" value="Keine Auswahl" className="w-[227px]" size="text-[11px]" />
        <button aria-label="Filter" className="flex w-6 justify-center">
          <Small><path d="M1.500 1.500h12L9 7v7l-3-2V7z" stroke="#aaa" /><path d="M12 8l1 2.500 2.500 0.500-2.500 1-1 3-1-3-2.500-1 2.500-1z" fill="#ffd21f" stroke="none" /></Small>
        </button>
        <button aria-label="Ansicht" className="flex h-[21px] w-6 items-center justify-center bg-[#1f4f80]">
          <svg viewBox="0 0 16 16" className="size-4"><path d="M0 8q8-9 16 0-8 9-16 0z" fill="#cfe2fa" /><circle cx="8" cy="8" r="3.500" fill="#2f6fc4" /><circle cx="8" cy="7.500" r="1.300" fill="#fff" /></svg>
        </button>
      </div>
      <table className="mt-[3px] mr-px w-[276px] table-fixed border-collapse self-end font-[Roboto] text-[11px] leading-none">
        <colgroup>
          <col className="w-3" />
          <col className="w-[85px]" />
          <col />
        </colgroup>
        {sections.map((s) => (
          <tbody key={s.title}>
            <tr className="h-[18px]">
              <td><Toggle /></td>
              <th colSpan={2} className="bg-[#434548] pl-1 text-left font-['DejaVu_Sans_Condensed'] font-bold">{s.title}</th>
            </tr>
            {s.rows.map((r) => (
              <tr key={r.name} className="h-[18px]">
                <td>{r.expand && <Toggle plus />}</td>
                <th className="truncate border-r border-b border-[#494c4f] pl-1 text-left font-normal text-clip">{r.name}</th>
                <td className={`border-b border-[#494c4f] pl-1 ${r.dim ? "text-[#74777a]" : ""}`}>
                  <span className="flex items-center">
                    {r.kind === "swatch" && <span className="mr-2 ml-0.5 size-3 border border-black bg-[#dfdfe3]" />}
                    {r.kind === "line" && <span className="mr-1 ml-0.5 h-px w-[90px] bg-white" />}
                    {r.value}
                  </span>
                </td>
              </tr>
            ))}
          </tbody>
        ))}
      </table>
    </aside>
  );
}

const sideIcons: [string, ReactNode][] = [
  ["Tipps", <path d="M12 1a8 8 0 0 0-8 8c0 4 4 6 5 10h6c1-4 5-6 5-10a8 8 0 0 0-8-8z M10 21h4 M10 23h4" />],
  ["Eigenschaften", <><path d="M0 4h5 M9 4h15 M0 12h16 M20 12h4 M0 20h9 M14 20h10" /><circle cx="7" cy="4" r="2" /><circle cx="18" cy="12" r="2" /><circle cx="11.500" cy="20" r="2" /></>],
  ["Ballon", <path d="M12 0.600C5 0.600 1.500 4 1.500 8c0 5 6 8 9 12h3c3-4 9-7 9-12 0-4-3.500-7.400-10.500-7.400z M12 0.600C8 2 7 5 7 8c0 5 3 8 4 12 M12 0.600C16 2 17 5 17 8c0 5-3 8-4 12 M12 1v18 M10.500 21h3v3h-3z" />],
  ["Übertragen", <><circle cx="12" cy="12" r="11.300" /><circle cx="6.500" cy="12" r="1.300" fill={W} /><path d="M10 8q4 4 0 8 M13 5q7 7 0 14" /></>],
  ["Aufbau", <path d="M0.600 2.600h23v4h-23z M0.600 8.500h23v7h-23z M0.600 18.600h23v3h-23z M3 6l3-3 M8 6l3-3 M13 6l3-3 M18 6l3-3 M4 9v3 M8 9v5 M12 9v3 M16 9v5 M20 9v3" />],
  ["Profile", <path d="M1 1h22v3h-6q-3 0-3 3v10q0 3 3 3h6v3H1v-3h6q3 0 3-3V7q0-3-3-3H1z" />],
  ["Layer", <path d="M12 1l11 6.500-11 6.500L1 7.500z M1 12l11 6.500L23 12 M1 16.500L12 23l11-6.500" />],
  ["Bauteile", <><path d="M12 2L22 7v11l-10 5-10-5V7z M2 7l10 5 10-5 M12 12v11" /><ellipse cx="12" cy="5.500" rx="4" ry="2.500" fill="#18191b" /><ellipse cx="12" cy="3.500" rx="4" ry="2.500" fill="#18191b" /></>],
  ["Cloud", <path d="M6 20.500a5.500 5.500 0 0 1-0.500-11A7 7 0 0 1 19 10a5.300 5.300 0 0 1-1 10.500z M12 17.500v-7 M9 13l3-3 3 3" />],
  ["Anheften", <path d="M13 2l8 8-6 2-1 9-5-6-7 7 7-7-6-5 9-2z" />],
];

function SideBar() {
  return (
    <nav className="mt-[9px] flex w-[47px] shrink-0 flex-col bg-[#18191b]">
      {sideIcons.map(([name, drawing], i) => (
        <button key={name} aria-label={name} className={`flex h-[50px] w-full items-center justify-center ${i === 1 ? "bg-[#2d3033]" : ""}`}>
          <svg viewBox="0 0 24 24" className="size-6" fill="none" stroke={W} strokeWidth="1.200" strokeLinejoin="round">{drawing}</svg>
        </button>
      ))}
    </nav>
  );
}

const status: { label: string; width: string; state?: "on" | "off" }[] = [
  { label: "Standard", width: "w-[53px]" },
  { label: "Bemaßung 1", width: "w-[68px]" },
  { label: "BIM", width: "w-7" },
  { label: "FANG", width: "w-[37px]", state: "off" },
  { label: "RASTER", width: "w-[51px]", state: "off" },
  { label: "ORTHO", width: "w-[45px]", state: "off" },
  { label: "POLAR", width: "w-[42px]", state: "on" },
  { label: "OFANG", width: "w-[45px]", state: "on" },
  { label: "OTRACK", width: "w-[49px]", state: "on" },
  { label: "LST", width: "w-[26px]", state: "off" },
  { label: "MODELL", width: "w-12" },
  { label: "1:1", width: "w-6" },
  { label: "DBKS", width: "w-[34px]", state: "on" },
  { label: "DYN", width: "w-[29px]", state: "on" },
  { label: "QUAD", width: "w-[38px]", state: "on" },
  { label: "RT", width: "w-[22px]", state: "on" },
  { label: "HKA", width: "w-[29px]", state: "on" },
  { label: "UISPERREN", width: "w-[65px]", state: "off" },
  { label: "Keine", width: "w-[35px]" },
];

function StatusBar() {
  return (
    <footer className="flex h-5 shrink-0 items-center bg-[#18191b] pt-0.5 font-[Roboto] text-[11px] whitespace-nowrap">
      <span className="pl-0.5">Bereit</span>
      <span className="ml-auto w-[174px] border-l border-white pr-[6px] text-right leading-4">27731.19, 9923.9, 0</span>
      {status.map((s) => (
        <button key={s.label} className={`h-4 shrink-0 border-l border-white px-0.5 text-left ${s.width}`}>
          <span className={`block px-px leading-4 ${s.state === "on" ? "mr-0.5 bg-[#44474b]" : ""} ${s.state === "off" ? "text-[#66696c]" : ""}`}>
            {s.label}
          </span>
        </button>
      ))}
      <span className="flex h-4 w-[60px] items-center border-l border-white pl-1">
        <Caret />
        <svg viewBox="0 0 8 8" className="mt-1.5 mr-0.5 ml-auto size-2" fill="#bbb"><path d="M6 0h2v2H6z M3 3h2v2H3z M6 3h2v2H6z M0 6h2v2H0z M3 6h2v2H3z M6 6h2v2H6z" /></svg>
      </span>
    </footer>
  );
}

export default function App() {
  return (
    <div className="flex h-screen flex-col overflow-hidden bg-[#2d3033] font-['Open_Sans',sans-serif] text-[#ececec]">
      <TitleBar />
      <Toolbar />
      <RibbonTabs />
      <Ribbon />
      <div className="flex min-h-0 flex-1">
        <nav className="flex w-[45px] shrink-0 flex-col">
          <span className="mx-auto mt-1 mb-[3px] w-4 border-t-2 border-dotted border-[#ddd]" />
          <div className="flex flex-1 flex-col bg-[#18191b]">
            <button aria-label="Start" className="flex h-[50px] items-center justify-center">
              <svg viewBox="0 0 24 24" className="size-6" fill="none" stroke={W} strokeWidth="1.500"><path d="M0.500 13L12 1l11.500 12 M3.500 10v13h6v-8h5v8h6V10" /></svg>
            </button>
            <button aria-label="Struktur" className="flex h-[50px] items-center justify-center">
              <svg viewBox="0 0 24 24" className="size-6" fill="none" stroke={W} strokeWidth="1.400"><path d="M0.700 1h10v5h-10z M11.500 9.500h12v5h-12z M11.500 18.500h12v5h-12z M5 6v15h6.500 M5 12h6.500" /></svg>
            </button>
          </div>
        </nav>
        <main className="flex min-w-0 flex-1 flex-col">
          <DocTabs />
          <div className="flex min-h-0 flex-1 flex-col border-t border-r border-l border-[#6a6c6e]">
            <Canvas />
            <LayoutTabs />
          </div>
          <CommandLine />
        </main>
        <Properties />
        <SideBar />
      </div>
      <StatusBar />
    </div>
  );
}
